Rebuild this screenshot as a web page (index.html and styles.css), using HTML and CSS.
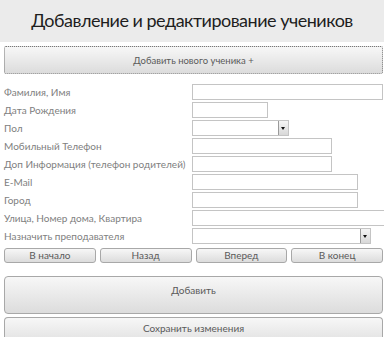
FILE: index.html
```html
<!DOCTYPE html>
<html lang="ru">
<head>
<meta charset="utf-8">
<link rel="stylesheet" href="styles.css">
</head>
<body>
<header class="header"><h1 class="title">Добавление и редактирование учеников</h1></header>
<main class="content">
  <button class="btn btn-new">Добавить нового ученика +</button>
  <div class="form">
    <label class="label">Фамилия, Имя</label><div class="field w-full"></div>
    <label class="label">Дата Рождения</label><div class="field w-date"></div>
    <label class="label">Пол</label><div class="field select w-sex"><span class="arrow"></span></div>
    <label class="label">Мобильный Телефон</label><div class="field w-phone"></div>
    <label class="label">Доп Информация (телефон родителей)</label><div class="field w-phone"></div>
    <label class="label">E-Mail</label><div class="field w-mail"></div>
    <label class="label">Город</label><div class="field w-mail"></div>
    <label class="label">Улица, Номер дома, Квартира</label><div class="field w-street"></div>
    <label class="label">Назначить преподавателя</label><div class="field select w-teacher"><span class="arrow"></span></div>
  </div>
  <nav class="nav">
    <button class="btn btn-nav">В начало</button>
    <button class="btn btn-nav">Назад</button>
    <button class="btn btn-nav">Вперед</button>
    <button class="btn btn-nav">В конец</button>
  </nav>
  <button class="btn btn-big btn-add">Добавить</button>
  <button class="btn btn-big btn-save">Сохранить изменения</button>
</main>
</body>
</html>
```
FILE: styles.css
```css
html, body { margin: 0; padding: 0; background: #fff; }
body { width: 384px; height: 337px; overflow: hidden; font-family: Lato, "Open Sans", sans-serif; }
.header { background: #ebebeb; height: 42px; display: flex; align-items: center; justify-content: center; }
.title { margin: 0; font-weight: normal; font-size: 18px; letter-spacing: -0.5px; color: #1e1e1e; padding-left: 0; padding-bottom: 2px; white-space: nowrap; }
.content { padding: 4px 1px 0 4px; display: flex; flex-direction: column; }
.btn { font-family: inherit; color: #5a5a5a; border: 1px solid #a8a8a8; border-radius: 3px; background: linear-gradient(#f7f7f7, #dcdcdc); padding: 0; margin: 0; white-space: nowrap; }
.btn-new { height: 28px; font-size: 9.5px; border: 1px dotted #777; border-radius: 2px; width: 379px; }
.form { display: grid; grid-template-columns: 188px 1fr; row-gap: 2px; margin-top: 10px; }
.label { font-size: 10px; color: #808080; height: 16px; line-height: 16px; white-space: nowrap; }
.field { height: 16px; box-sizing: border-box; border: 1px solid #c4c4c4; background: #fff; position: relative; }
.w-full { width: 191px; }
.w-date { width: 76px; }
.w-sex { width: 97px; }
.w-phone { width: 140px; }
.w-mail { width: 166px; }
.w-street { width: 200px; }
.w-teacher { width: 179px; }
.arrow { position: absolute; right: 0; top: 0; width: 10px; height: 14px; box-sizing: border-box; border-left: 1px solid #9a9a9a; background: linear-gradient(#f5f5f5, #d8d8d8); }
.arrow::after { content: ""; position: absolute; left: 2px; top: 6px; border-left: 2.5px solid transparent; border-right: 2.5px solid transparent; border-top: 3px solid #111; }
.nav { display: flex; gap: 4px; margin-top: 4px; width: 379px; }
.btn-nav { flex: 1; height: 15px; font-size: 10px; line-height: 13px; }
.btn-big { height: 38px; font-size: 10px; width: 379px; border-radius: 4px; flex-shrink: 0; }
.btn-add { margin-top: 13px; margin-bottom: 3px; padding-bottom: 10px; }
.btn-save { height: 20px; border-bottom: none; border-radius: 4px 4px 0 0; background: linear-gradient(#f7f7f7, #e6e6e6); }
```
